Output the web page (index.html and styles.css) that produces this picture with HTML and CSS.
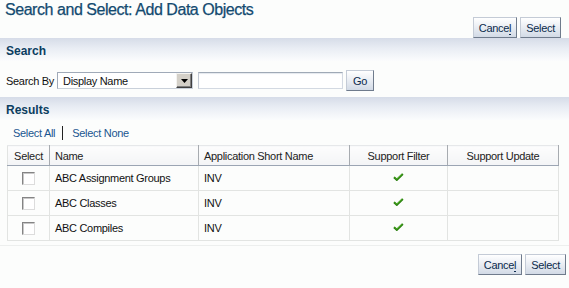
FILE: index.html
```html
<!DOCTYPE html>
<html>
<head>
<meta charset="utf-8">
<title>Search and Select: Add Data Objects</title>
<link rel="stylesheet" href="styles.css">
</head>
<body>
<div class="page">
  <h1 class="title">Search and Select: Add Data Objects</h1>
  <div class="btn-row top">
    <button class="btn">Cance<u>l</u></button>
    <button class="btn">Select</button>
  </div>

  <div class="band"><h2>Search</h2></div>
  <div class="search-row">
    <span class="label">Search By</span>
    <div class="select">
      <span class="select-text">Display Name</span>
      <span class="drop"><svg width="7" height="4" viewBox="0 0 7 4"><path d="M0 0H7L3.5 4Z" fill="#000"/></svg></span>
    </div>
    <div class="input"></div>
    <button class="btn go">Go</button>
  </div>

  <div class="band results"><h2>Results</h2></div>
  <div class="links">
    <a class="link">Select All</a>
    <span class="sep"></span>
    <a class="link">Select None</a>
  </div>

  <table class="grid">
    <colgroup>
      <col class="c1"><col class="c2"><col class="c3"><col class="c4"><col class="c5">
    </colgroup>
    <thead>
      <tr>
        <th class="center">Select</th>
        <th>Name</th>
        <th>Application Short Name</th>
        <th class="center">Support Filter</th>
        <th class="center">Support Update</th>
      </tr>
    </thead>
    <tbody>
      <tr>
        <td class="center"><span class="cb"></span></td>
        <td>ABC Assignment Groups</td>
        <td>INV</td>
        <td class="center"><svg class="check" width="11" height="8" viewBox="0 0 11 8"><path d="M1 4.2L3.8 6.8L9.8 1" fill="none" stroke="#2b8010" stroke-width="2.2"/><path d="M1.6 4.2L3.8 6.1L9.3 1" fill="none" stroke="#55b82a" stroke-width="0.9"/></svg></td>
        <td></td>
      </tr>
      <tr>
        <td class="center"><span class="cb"></span></td>
        <td>ABC Classes</td>
        <td>INV</td>
        <td class="center"><svg class="check" width="11" height="8" viewBox="0 0 11 8"><path d="M1 4.2L3.8 6.8L9.8 1" fill="none" stroke="#2b8010" stroke-width="2.2"/><path d="M1.6 4.2L3.8 6.1L9.3 1" fill="none" stroke="#55b82a" stroke-width="0.9"/></svg></td>
        <td></td>
      </tr>
      <tr>
        <td class="center"><span class="cb"></span></td>
        <td>ABC Compiles</td>
        <td>INV</td>
        <td class="center"><svg class="check" width="11" height="8" viewBox="0 0 11 8"><path d="M1 4.2L3.8 6.8L9.8 1" fill="none" stroke="#2b8010" stroke-width="2.2"/><path d="M1.6 4.2L3.8 6.1L9.3 1" fill="none" stroke="#55b82a" stroke-width="0.9"/></svg></td>
        <td></td>
      </tr>
    </tbody>
  </table>

  <div class="rule"></div>
  <div class="btn-row bottom">
    <button class="btn">Cance<u>l</u></button>
    <button class="btn">Select</button>
  </div>
</div>
</body>
</html>
```

FILE: styles.css
```css
* { box-sizing: border-box; }

html, body {
  margin: 0;
  background: #fcfdfc;
}

body {
  font-family: "Liberation Sans", Arial, sans-serif;
  font-size: 11px;
  color: #111;
  letter-spacing: -0.3px;
}

.page {
  width: 569px;
}

.title {
  margin: 0;
  height: 17px;
  padding-left: 5px;
  font-size: 16px;
  line-height: 19px;
  font-weight: normal;
  color: #134a70;
  letter-spacing: -0.45px;
  white-space: nowrap;
  -webkit-text-stroke: 0.25px #134a70;
}

.btn-row {
  display: flex;
  justify-content: flex-end;
  gap: 3px;
}

.btn-row.top {
  height: 21px;
  padding-right: 8px;
}

.btn-row.bottom {
  margin-top: 8px;
  padding-right: 3px;
}

.btn {
  height: 21px;
  margin: 0;
  padding: 0 5px;
  font-family: "Liberation Sans", Arial, sans-serif;
  font-size: 11px;
  letter-spacing: -0.3px;
  color: #0b2a4c;
  background: linear-gradient(#ffffff, #e9edf3 50%, #d2dae6);
  border: 1px solid;
  border-color: #c4cbd6 #6f7b8c #6f7b8c #c4cbd6;
  border-radius: 0;
}

.btn u {
  text-decoration: none;
  border-bottom: 1px solid #0b2a4c;
}

.band {
  height: 23px;
  padding-left: 6px;
  background: linear-gradient(#d6dce8, #e9edf4 45%, #fbfcfd 100%);
}

.band h2 {
  margin: 0;
  padding-top: 2px;
  font-size: 12px;
  line-height: 22px;
  font-weight: bold;
  color: #0b3d60;
  letter-spacing: 0;
}

.search-row {
  display: flex;
  align-items: center;
  height: 21px;
  margin-top: 9px;
  padding-left: 6px;
}

.label {
  width: 51px;
  color: #111;
}

.select {
  display: flex;
  align-items: center;
  justify-content: space-between;
  width: 136px;
  height: 17px;
  background: #fff;
  border: 1px solid;
  border-color: #a0aab8 #c9d0da #c9d0da #a0aab8;
}

.select-text {
  padding-left: 5px;
  color: #111;
}

.drop {
  display: flex;
  align-items: center;
  justify-content: center;
  width: 16px;
  height: 15px;
  background: #d4d0c8;
  border: 1px solid;
  border-color: #f4f3f0 #404040 #404040 #f4f3f0;
  box-shadow: inset -1px -1px 0 #808080;
}

.input {
  width: 145px;
  height: 17px;
  margin-left: 5px;
  background: #fff;
  border: 1px solid;
  border-color: #9fa9b6 #d3d9e2 #d3d9e2 #c3cad5;
  box-shadow: inset 0 1px 1px #e4e8ee;
}

.btn.go {
  margin-left: 3px;
  padding: 0 6px;
}

.band.results {
  margin-top: 6px;
}

.links {
  display: flex;
  align-items: center;
  height: 25px;
  padding-left: 13px;
}

.link {
  color: #1a5690;
  cursor: pointer;
}

.sep {
  width: 1px;
  height: 14px;
  margin: 0 9px 0 7px;
  background: #222;
}

.grid {
  margin-left: 7px;
  width: 551px;
  border-collapse: collapse;
  table-layout: fixed;
}

.c1 { width: 42px; }
.c2 { width: 149px; }
.c3 { width: 151px; }
.c4 { width: 98px; }
.c5 { width: 111px; }

.grid th {
  height: 20px;
  padding: 0 5px;
  text-align: left;
  font-weight: normal;
  color: #222;
  background: linear-gradient(#fdfdfd, #f3f4f6);
  border-top: 1px solid #e6e8ea;
  border-left: 1px solid #a7abb0;
  border-right: 1px solid #a7abb0;
  border-bottom: 1px solid #9ba5b3;
  white-space: nowrap;
}

.grid th:first-child {
  border-left-color: #e2e4e2;
}

.grid td {
  height: 25px;
  padding: 0 5px;
  border: 1px solid #e2e4e2;
  white-space: nowrap;
}

.grid .center {
  text-align: center;
}

.cb {
  display: inline-block;
  width: 13px;
  height: 13px;
  vertical-align: middle;
  background: #fff;
  border: 1px solid;
  border-color: #848484 #dcdcdc #dcdcdc #848484;
  box-shadow: inset 1px 1px 0 #c8c8c8;
}

.check {
  display: inline-block;
  vertical-align: middle;
  margin-top: -4px;
}

.rule {
  height: 1px;
  margin-top: 4px;
  background: #edefee;
}
```
